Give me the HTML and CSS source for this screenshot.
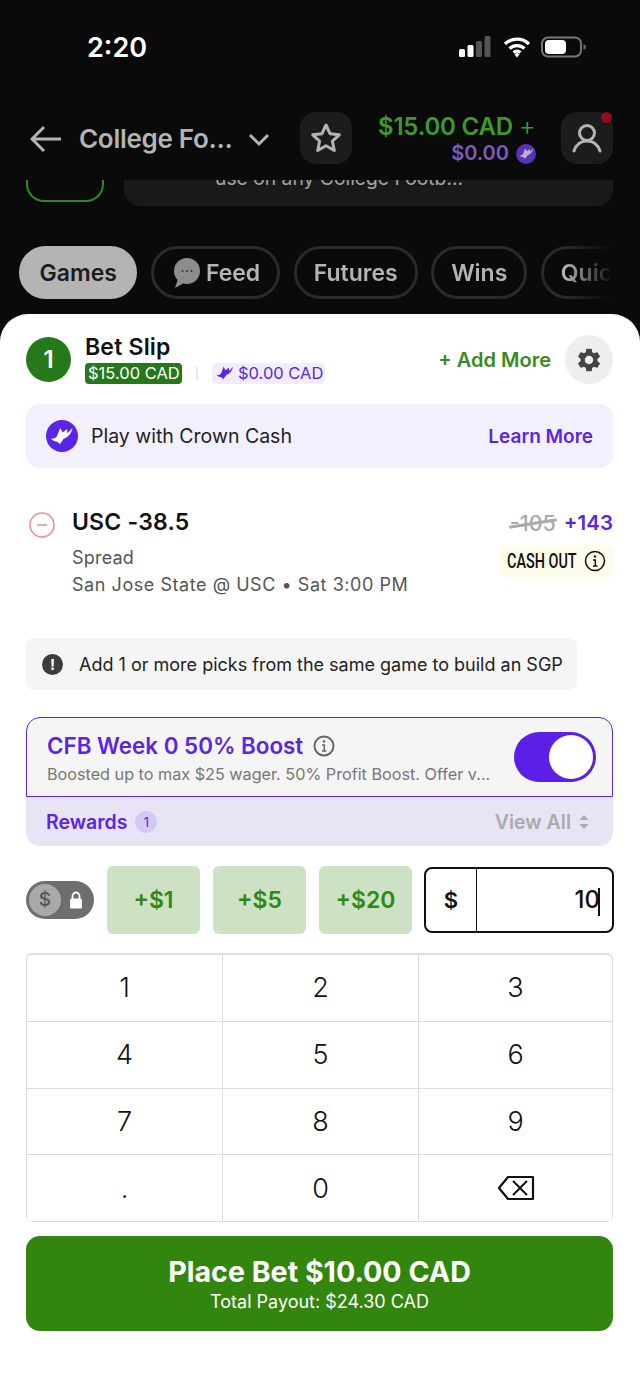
FILE: index.html
```html
<!DOCTYPE html>
<html lang="en">
  <head>
    <meta charset="UTF-8" />
    <meta name="viewport" content="width=device-width, initial-scale=1.0" />
    <title>Bet Slip</title>
    <link rel="stylesheet" href="styles.css">
  </head>
  <body>
    <svg class="defs" width="0" height="0">
      <symbol id="crown" viewBox="0 0 24 24">
        <path d="M2 14.200C4 14.800 6 14.200 7.300 12.200L10.300 4.500 12.700 8.800 16.700 5.500 17 9.500 21.700 4.500C20.700 9.500 18 12.800 13.300 14.800L10 19.500C8.700 17.500 7.300 16.800 5.300 16.800 4 16.200 2.700 15.500 2 14.200z" fill="currentColor" />
      </symbol>
    </svg>

    <!-- Status bar -->
    <div class="status-bar">
      <span class="time">2:20</span>
      <div class="status-icons">
        <svg class="signal" width="32" height="24" viewBox="0 0 32 24">
          <rect x="0" y="14" width="6" height="8" rx="1.500" fill="#fff" />
          <rect x="8.500" y="10" width="6" height="12" rx="1.500" fill="#fff" />
          <rect x="17" y="6" width="6" height="16" rx="1.500" fill="#555" />
          <rect x="25.500" y="1" width="6" height="21" rx="1.500" fill="#555" />
        </svg>
        <svg width="28" height="24" viewBox="0 0 28 24">
          <path d="M2 9a17 17 0 0 1 24 0M6.500 13.500a11 11 0 0 1 15 0M10.500 17.500a5.500 5.500 0 0 1 7 0" fill="none" stroke="#fff" stroke-width="3.200" />
          <path d="M11.500 19.500l2.500-2 2.500 2-2.500 3z" fill="#fff" />
        </svg>
        <svg width="46" height="24" viewBox="0 0 46 24">
          <rect x="1" y="2.500" width="39" height="19" rx="6" fill="none" stroke="#777" stroke-width="2" />
          <rect x="4" y="5" width="21" height="14" rx="4" fill="#fff" />
          <path d="M42.500 9v6c1.500-.5 2.500-1.500 2.500-3s-1-2.500-2.500-3z" fill="#666" />
        </svg>
      </div>
    </div>

    <!-- Top nav -->
    <div class="top-nav">
      <svg class="back" width="32" height="28" viewBox="0 0 32 28">
        <path d="M14 2L2 14l12 12M2 14h29" fill="none" stroke="#b4b4b4" stroke-width="3" />
      </svg>
      <span class="league">College Fo...</span>
      <svg class="chevron" width="22" height="14" viewBox="0 0 22 14">
        <path d="M2 2l9 9 9-9" fill="none" stroke="#b4b4b4" stroke-width="3" />
      </svg>
      <div class="nav-btn star-btn">
        <svg width="32" height="32" viewBox="0 0 32 32">
          <path d="M16 3l4 8.700 9.300 1.100-6.900 6.400 1.900 9.300L16 23.800 7.700 28.500l1.900-9.300-6.900-6.400L12 11.700z" fill="none" stroke="#b4b4b4" stroke-width="3" stroke-linejoin="round" />
        </svg>
      </div>
      <div class="balance">
        <div class="balance-cash">$15.00 CAD <span class="balance-plus">+</span></div>
        <div class="balance-crown">
          $0.00
          <span class="balance-icon"><svg width="17" height="17"><use href="#crown" /></svg></span>
        </div>
      </div>
      <div class="nav-btn profile-btn">
        <svg width="32" height="32" viewBox="0 0 32 32">
          <circle cx="16" cy="11" r="7.500" fill="none" stroke="#b4b4b4" stroke-width="3" />
          <path d="M3 29c2-6 6-10 13-10s11 4 13 10" fill="none" stroke="#b4b4b4" stroke-width="3" stroke-linecap="round" />
        </svg>
        <span class="red-dot"></span>
      </div>
    </div>

    <!-- Promo cards scrolled under the nav -->
    <div class="promo-row">
      <div class="promo-thumb"></div>
      <div class="promo-card"><span class="promo-text">use on any College Footb...</span></div>
    </div>

    <!-- Tabs -->
    <div class="tabs">
      <div class="tab tab-active">Games</div>
      <div class="tab">
        <svg width="30" height="32" viewBox="0 0 30 32">
          <circle cx="16" cy="14" r="13" fill="#8d8d8d" />
          <path d="M7 22l-3 9 9-5z" fill="#8d8d8d" />
          <circle cx="11.500" cy="14" r="1" fill="#333" />
          <circle cx="16" cy="14" r="1" fill="#333" />
          <circle cx="20.500" cy="14" r="1" fill="#333" />
        </svg>
        Feed
      </div>
      <div class="tab">Futures</div>
      <div class="tab">Wins</div>
      <div class="tab">Quick</div>
    </div>

    <!-- Bet slip sheet -->
    <div class="sheet">
      <div class="slip-head">
        <div class="slip-count">1</div>
        <div class="slip-title">
          <div class="slip-name">Bet Slip</div>
          <div class="slip-badges">
            <span class="badge-cash">$15.00 CAD</span>
            <span class="badge-sep"></span>
            <span class="badge-crown"><svg width="20" height="20"><use href="#crown" /></svg>$0.00 CAD</span>
          </div>
        </div>
        <span class="add-more">+ Add More</span>
        <div class="gear">
          <svg width="28" height="28" viewBox="0 0 24 24">
            <path fill="#444" d="M19.140 12.940c.04-.3.06-.61.06-.94 0-.32-.02-.64-.07-.94l2.030-1.580c.18-.14.23-.41.12-.61l-1.920-3.320c-.12-.22-.37-.29-.59-.22l-2.390.96c-.5-.38-1.030-.7-1.620-.94l-.36-2.540c-.04-.24-.24-.41-.48-.41h-3.840c-.24 0-.43.17-.47.41l-.36 2.540c-.59.24-1.130.57-1.620.94l-2.390-.96c-.22-.08-.47 0-.59.22L2.740 8.870c-.12.21-.08.47.12.61l2.030 1.580c-.05.3-.09.63-.09.94s.02.64.07.94l-2.030 1.580c-.18.14-.23.41-.12.61l1.920 3.320c.12.22.37.29.59.22l2.390-.96c.5.38 1.030.7 1.620.94l.36 2.540c.05.24.24.41.48.41h3.840c.24 0 .44-.17.47-.41l.36-2.540c.59-.24 1.130-.56 1.620-.94l2.390.96c.22.08.47 0 .59-.22l1.920-3.320c.12-.22.07-.47-.12-.61l-2.010-1.580zM12 15.600c-1.980 0-3.600-1.620-3.600-3.600s1.620-3.600 3.600-3.600 3.600 1.620 3.600 3.600-1.620 3.600-3.600 3.600z" />
          </svg>
        </div>
      </div>

      <div class="crown-banner">
        <span class="crown-icon"><svg width="26" height="26"><use href="#crown" /></svg></span>
        <span class="crown-text">Play with Crown Cash</span>
        <span class="learn-more">Learn More</span>
      </div>

      <!-- Selected pick -->
      <div class="pick">
        <svg class="pick-remove" width="26" height="26" viewBox="0 0 26 26">
          <circle cx="13" cy="13" r="12" fill="none" stroke="#ee8a92" stroke-width="1.500" />
          <path d="M8 13h10" stroke="#ee8a92" stroke-width="1.500" />
        </svg>
        <div class="pick-info">
          <div class="pick-name">USC -38.5</div>
          <div class="pick-type">Spread</div>
          <div class="pick-game">San Jose State @ USC • Sat 3:00 PM</div>
        </div>
        <div class="pick-odds">
          <div class="odds"><span class="odds-old">-105</span><span class="odds-new">+143</span></div>
          <div class="cash-out">
            <span class="cash-out-text">CASH OUT</span>
            <svg width="22" height="22" viewBox="0 0 22 22">
              <circle cx="11" cy="11" r="9.500" fill="none" stroke="#111" stroke-width="1.500" />
              <path d="M9 10h2.300v6M9 16h4.500" fill="none" stroke="#111" stroke-width="1.400" />
              <circle cx="11" cy="6.500" r="1.200" fill="#111" />
            </svg>
          </div>
        </div>
      </div>

      <div class="notice">
        <span class="notice-icon">!</span>
        <span>Add 1 or more picks from the same game to build an SGP</span>
      </div>

      <!-- Boost -->
      <div class="boost">
        <div class="boost-text">
          <div class="boost-title">
            CFB Week 0 50% Boost
            <svg width="22" height="22" viewBox="0 0 22 22">
              <circle cx="11" cy="11" r="9.500" fill="none" stroke="#666" stroke-width="2" />
              <path d="M9 10h2.300v6M9 16h4.500" fill="none" stroke="#666" stroke-width="1.500" />
              <circle cx="11" cy="6.500" r="1.300" fill="#666" />
            </svg>
          </div>
          <div class="boost-sub">Boosted up to max $25 wager. 50% Profit Boost. Offer v...</div>
        </div>
        <div class="switch"><span class="switch-knob"></span></div>
      </div>
      <div class="rewards">
        <span class="rewards-label">Rewards</span>
        <span class="rewards-count">1</span>
        <span class="view-all">View All</span>
        <svg width="10" height="16" viewBox="0 0 10 16">
          <path d="M5 1l4.500 5h-9zM5 15l4.500-5h-9z" fill="#aaa" />
        </svg>
      </div>

      <!-- Stake -->
      <div class="stake">
        <div class="lock-toggle">
          <span class="lock-knob">$</span>
          <svg width="14" height="18" viewBox="0 0 14 18">
            <path d="M3.500 8V5a3.500 3.500 0 0 1 7 0v3" fill="none" stroke="#fff" stroke-width="1.800" />
            <rect x="1" y="7.500" width="12" height="10" rx="1.500" fill="#fff" />
          </svg>
        </div>
        <div class="quick-add">+$1</div>
        <div class="quick-add">+$5</div>
        <div class="quick-add">+$20</div>
        <div class="stake-input">
          <span class="stake-cur">$</span>
          <span class="stake-val">10<span class="caret"></span></span>
        </div>
      </div>

      <div class="keypad">
        <div class="key">1</div>
        <div class="key">2</div>
        <div class="key">3</div>
        <div class="key">4</div>
        <div class="key">5</div>
        <div class="key">6</div>
        <div class="key">7</div>
        <div class="key">8</div>
        <div class="key">9</div>
        <div class="key">.</div>
        <div class="key">0</div>
        <div class="key">
          <svg width="38" height="26" viewBox="0 0 38 26">
            <path d="M11 2h25v22H11L2 13z" fill="none" stroke="#111" stroke-width="2.200" stroke-linejoin="round" />
            <path d="M16 6l14 14M30 6L16 20" stroke="#111" stroke-width="2" />
          </svg>
        </div>
      </div>

      <div class="place-bet">
        <div class="place-title">Place Bet $10.00 CAD</div>
        <div class="place-sub">Total Payout: $24.30 CAD</div>
      </div>
    </div>
  </body>
</html>
```
FILE: styles.css
```css
* {
  box-sizing: border-box;
}
html,
body {
  height: 100%;
}
body {
  font-family: Inter, "Liberation Sans", sans-serif;
  margin: 0;
  background-color: #0a0a0a;
  display: flex;
  flex-direction: column;
  overflow: hidden;
}
.defs {
  position: absolute;
}

/* status bar */
.status-bar {
  height: 94px;
  padding: 30px 53px 0 87px;
  display: flex;
  justify-content: space-between;
  align-items: flex-start;
}
.time {
  color: #fff;
  font-size: 27px;
  font-weight: 600;
  line-height: 34px;
  margin-top: 1px;
}
.status-icons {
  display: flex;
  align-items: center;
  gap: 10px;
  padding-top: 5px;
}
.signal {
  margin-right: 2px;
}

/* nav */
.top-nav {
  height: 86px;
  padding: 18px 27px 0 30px;
  display: flex;
  align-items: flex-start;
}
.back {
  margin-top: 13px;
}
.league {
  color: #b4b4b4;
  font-size: 26px;
  font-weight: 600;
  line-height: 54px;
  margin-left: 17px;
  letter-spacing: -0.3px;
  width: 153px;
  white-space: nowrap;
}
.chevron {
  margin: 21px 0 0 16px;
}
.nav-btn {
  width: 52px;
  height: 52px;
  border-radius: 16px;
  background-color: #1c1c1c;
  display: flex;
  align-items: center;
  justify-content: center;
  position: relative;
}
.star-btn {
  margin-left: 30px;
}
.profile-btn {
  margin-left: 25px;
}
.red-dot {
  position: absolute;
  top: 0;
  right: 1px;
  width: 11px;
  height: 11px;
  border-radius: 50%;
  background-color: #8f0f1c;
}
.balance {
  margin-left: 26px;
  padding-top: 1px;
  width: 158px;
  text-align: right;
  font-weight: 600;
  font-size: 24px;
  line-height: 27px;
}
.balance-cash {
  color: #3c9a2a;
  height: 27px;
  padding-right: 2px;
  white-space: nowrap;
  letter-spacing: -0.2px;
}
.balance-plus {
  font-weight: 300;
  font-size: 26px;
  line-height: 1;
}
.balance-crown {
  color: #7c5cc4;
  display: flex;
  align-items: center;
  justify-content: flex-end;
  gap: 7px;
  font-size: 20px;
}
.balance-icon {
  width: 20px;
  height: 20px;
  border-radius: 50%;
  background-color: #5a32b8;
  color: #b9b4c8;
  display: flex;
  align-items: center;
  justify-content: center;
}

/* promo cards */
.promo-row {
  height: 26px;
  padding: 0 27px 0 26px;
  display: flex;
  gap: 20px;
  overflow: hidden;
}
.promo-thumb {
  width: 78px;
  height: 22px;
  border: 2px solid #2f8a23;
  border-top: none;
  border-radius: 0 0 18px 18px;
}
.promo-card {
  flex: 1;
  background-color: #191919;
  border-radius: 0 0 16px 16px;
  text-align: left;
  padding-left: 91px;
  overflow: hidden;
}
.promo-text {
  display: block;
  margin-top: -12px;
  color: #a5a5a5;
  font-size: 19.300px;
  line-height: 20px;
  white-space: nowrap;
}

/* tabs */
.tabs {
  margin: 40px 27px 0 19px;
  height: 53px;
  display: flex;
  gap: 13.500px;
  overflow: hidden;
  -webkit-mask-image: linear-gradient(to right, #000 92%, transparent 100%);
  mask-image: linear-gradient(to right, #000 92%, transparent 100%);
}
.tab {
  flex: none;
  height: 53px;
  padding: 0 17px;
  border: 3px solid #2a2a2a;
  border-radius: 27px;
  color: #b4b4b4;
  font-size: 23px;
  font-weight: 600;
  display: flex;
  align-items: center;
  gap: 5px;
}
.tab-active {
  background-color: #b4b4b4;
  border-color: #b4b4b4;
  color: #1c1c1c;
  padding: 0 17.500px;
}

/* sheet */
.sheet {
  flex: 1;
  margin-top: 15px;
  background-color: #fff;
  border-radius: 28px 28px 0 0;
  padding: 21px 27px 0 26px;
}
.slip-head {
  display: flex;
  align-items: center;
  height: 49px;
}
.slip-count {
  width: 45px;
  height: 45px;
  border-radius: 50%;
  background-color: #25791b;
  color: #fff;
  font-size: 24px;
  font-weight: 600;
  display: flex;
  align-items: center;
  justify-content: center;
}
.slip-title {
  margin-left: 14px;
  flex: 1;
}
.slip-name {
  font-size: 23px;
  font-weight: 600;
  line-height: 26px;
  color: #111;
  margin-top: -2px;
  margin-bottom: 2px;
  letter-spacing: 0.2px;
}
.slip-badges {
  display: flex;
  align-items: center;
  height: 22px;
  margin-bottom: -1px;
}
.badge-cash {
  background-color: #25791b;
  color: #fff;
  font-size: 16.500px;
  line-height: 21px;
  padding: 0 3px;
  border-radius: 4px;
  width: 97px;
  text-align: center;
  white-space: nowrap;
}
.badge-sep {
  width: 2px;
  height: 13px;
  margin: 0 14px;
  background-color: #e6e6e6;
}
.badge-crown {
  background-color: #f1edfd;
  color: #5b25e8;
  font-size: 16.500px;
  line-height: 21px;
  padding: 0 3px;
  border-radius: 5px;
  display: flex;
  align-items: center;
  gap: 3px;
  width: 113px;
  white-space: nowrap;
}
.badge-crown svg {
  flex: none;
}
.add-more {
  color: #3a8a22;
  font-size: 20px;
  font-weight: 600;
  margin-right: 14px;
}
.gear {
  width: 48px;
  height: 49px;
  border-radius: 50%;
  background-color: #eeeeee;
  display: flex;
  align-items: center;
  justify-content: center;
}
.crown-banner {
  margin-top: 20px;
  height: 64px;
  padding: 0 20px;
  border-radius: 14px;
  background-color: #f3f0fe;
  display: flex;
  align-items: center;
}
.crown-icon {
  width: 32px;
  height: 32px;
  border-radius: 50%;
  background-color: #5b25e8;
  color: #fff;
  display: flex;
  align-items: center;
  justify-content: center;
}
.crown-text {
  flex: 1;
  margin-left: 13px;
  font-size: 19.500px;
  color: #222;
}
.learn-more {
  color: #5b25e8;
  font-size: 19px;
  font-weight: 600;
}

/* pick */
.pick {
  margin-top: 40px;
  display: flex;
  align-items: flex-start;
  height: 130px;
}
.pick-remove {
  margin: 4px 0 0 3px;
}
.pick-info {
  flex: 1;
  margin-left: 17px;
}
.pick-name {
  font-size: 23px;
  font-weight: 600;
  line-height: 28px;
  color: #111;
  margin-bottom: 8px;
  letter-spacing: 0.2px;
}
.pick-type,
.pick-game {
  color: #555;
  font-size: 18px;
  line-height: 27px;
}
.pick-type {
  letter-spacing: 0.2px;
}
.pick-game {
  letter-spacing: 0.55px;
  white-space: nowrap;
}
.pick-odds {
  display: flex;
  flex-direction: column;
  align-items: flex-end;
  margin-top: 2px;
}
.odds {
  font-size: 20.500px;
  line-height: 26px;
  font-weight: 600;
  display: flex;
  gap: 8px;
}
.odds-old {
  color: #aaa;
  font-weight: 500;
  font-size: 21.500px;
  position: relative;
}
.odds-old::after {
  content: "";
  position: absolute;
  left: -1px;
  right: -1px;
  top: 12px;
  height: 3px;
  background-color: #aaa;
  transform: rotate(-9deg);
}
.odds-new {
  color: #5b25e8;
}
.cash-out {
  margin-top: 9px;
  width: 113px;
  height: 32px;
  padding: 0 7px;
  border-radius: 5px;
  background-color: #fdfbe9;
  display: flex;
  align-items: center;
  justify-content: space-between;
}
.cash-out-text {
  font-family: Roboto, "Liberation Sans", sans-serif;
  font-size: 20px;
  font-weight: 500;
  color: #111;
  white-space: nowrap;
  display: inline-block;
  width: 68px;
  transform: scaleX(0.72);
  transform-origin: left center;
}

/* notice */
.notice {
  margin-top: 0;
  width: 551px;
  height: 52px;
  padding: 0 16px;
  border-radius: 8px;
  background-color: #f5f5f5;
  display: flex;
  align-items: center;
  gap: 16px;
  font-size: 18px;
  color: #222;
  white-space: nowrap;
}
.notice-icon {
  flex: none;
  width: 21px;
  height: 21px;
  border-radius: 50%;
  background-color: #3d3d3d;
  color: #fff;
  font-size: 15px;
  font-weight: 700;
  text-align: center;
  line-height: 21px;
}

/* boost */
.boost {
  margin-top: 27px;
  height: 80px;
  padding: 0 16px 0 20px;
  border: 1.500px solid #5b25e8;
  border-radius: 14px 14px 0 0;
  background-color: #f5f5f5;
  display: flex;
  align-items: center;
  justify-content: space-between;
}
.boost-text {
  padding-top: 1px;
}
.boost-title {
  color: #5b25e8;
  font-size: 22.400px;
  font-weight: 600;
  line-height: 28px;
  display: flex;
  align-items: center;
  gap: 10px;
  white-space: nowrap;
}
.boost-sub {
  margin-top: 4px;
  color: #777;
  font-size: 16.200px;
  line-height: 20px;
  white-space: nowrap;
}
.switch {
  width: 82px;
  height: 50px;
  border-radius: 25px;
  background-color: #5b1fe8;
  padding: 3px;
  display: flex;
  justify-content: flex-end;
}
.switch-knob {
  width: 44px;
  height: 44px;
  border-radius: 50%;
  background-color: #fff;
}
.rewards {
  height: 49px;
  padding: 0 24px 0 20px;
  border-radius: 0 0 14px 14px;
  background-color: #e8e4f5;
  display: flex;
  align-items: center;
}
.rewards-label {
  color: #5b25e8;
  font-size: 19.500px;
  font-weight: 600;
}
.rewards-count {
  margin-left: 8px;
  width: 22px;
  height: 22px;
  border-radius: 50%;
  background-color: #d5c8f7;
  color: #5b25e8;
  font-size: 13px;
  text-align: center;
  line-height: 22px;
}
.view-all {
  margin-left: auto;
  margin-right: 8px;
  color: #aaa;
  font-size: 19.500px;
  font-weight: 600;
}

/* stake */
.stake {
  margin-top: 20px;
  height: 68px;
  display: flex;
  align-items: center;
}
.lock-toggle {
  width: 68px;
  height: 38px;
  border-radius: 19px;
  background-color: #6e6e6e;
  padding: 3px 11px 3px 3px;
  display: flex;
  align-items: center;
  justify-content: space-between;
}
.lock-knob {
  width: 32px;
  height: 32px;
  border-radius: 50%;
  background-color: #a9a9a9;
  color: #555;
  font-size: 19px;
  font-weight: 500;
  text-align: center;
  line-height: 32px;
}
.quick-add {
  width: 93px;
  height: 68px;
  margin-left: 13px;
  border-radius: 6px;
  background-color: #cde2c5;
  color: #2f8a12;
  font-size: 23px;
  font-weight: 600;
  display: flex;
  align-items: center;
  justify-content: center;
}
.stake-input {
  flex: 1;
  height: 66px;
  margin-left: 12px;
  margin-right: -1px;
  border: 2px solid #111;
  border-radius: 8px;
  display: flex;
  color: #111;
}
.stake-cur {
  width: 51px;
  border-right: 1.500px solid #111;
  font-size: 22px;
  font-weight: 600;
  text-align: center;
  line-height: 62px;
}
.stake-val {
  flex: 1;
  padding-right: 12px;
  font-size: 24px;
  font-weight: 500;
  text-align: right;
  line-height: 62px;
  position: relative;
}
.caret {
  position: absolute;
  top: 19px;
  right: 12px;
  width: 2px;
  height: 28px;
  background-color: #111;
}

/* keypad */
.keypad {
  margin-top: 19px;
  display: grid;
  grid-template-columns: 196px 196px 1fr;
  grid-auto-rows: 66.750px;
  border: 1.500px solid #dddddd;
  border-top-width: 2.500px;
  border-bottom: none;
  border-radius: 6px;
  overflow: hidden;
}
.key {
  display: flex;
  align-items: center;
  justify-content: center;
  font-size: 27px;
  font-weight: 300;
  color: #111;
  border-bottom: 1.500px solid #dddddd;
  border-right: 1.500px solid #dddddd;
}
.key:nth-child(3n) {
  border-right: none;
}

/* place bet */
.place-bet {
  margin-top: 14px;
  height: 95px;
  border-radius: 14px;
  background-color: #33860d;
  color: #fff;
  text-align: center;
  padding-top: 18px;
}
.place-title {
  font-size: 28.600px;
  font-weight: 700;
  line-height: 36px;
}
.place-sub {
  font-size: 18px;
  line-height: 23px;
}
```
